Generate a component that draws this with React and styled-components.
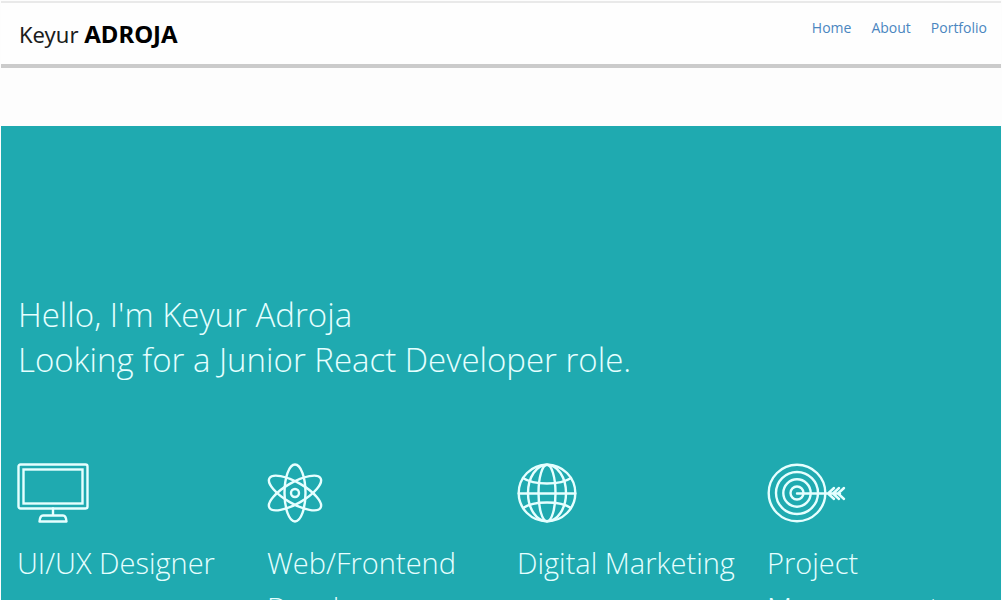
import React from "react";
import styled, { createGlobalStyle } from "styled-components";

const GlobalStyle = createGlobalStyle`
  *, *::before, *::after { box-sizing: border-box; }
  body {
    margin: 0;
    background: #fdfdfd;
    font-family: "Open Sans", "Noto Sans", sans-serif;
  }
`;

const Page = styled.div`
  padding: 1px 1px 0;
`;

const Header = styled.header`
  display: flex;
  justify-content: space-between;
  align-items: flex-start;
  height: 67px;
  padding: 15px 14px 0 18px;
  background: #fefefe;
  border-top: 2px solid #e9e9e9;
  border-bottom: 4px solid #cbcbcb;
`;

const Brand = styled.a`
  font-family: "Noto Sans", sans-serif;
  font-size: 22px;
  line-height: 32px;
  color: #1c1c1c;
  text-decoration: none;

  strong {
    font-size: 24px;
    font-weight: 700;
    color: #000;
  }
`;

const Nav = styled.nav`
  display: flex;
  gap: 20px;
`;

const NavLink = styled.a`
  font-size: 14px;
  line-height: 20px;
  color: #4a86c0;
  text-decoration: none;
`;

const Hero = styled.main`
  margin-top: 58px;
  padding: 166px 0 80px;
  background: #1faab0;
  color: #e6ffff;
`;

const Headline = styled.h1`
  margin: 0;
  padding: 0 17px;
  font-size: 33px;
  font-weight: 300;
  line-height: 45px;

  span {
    display: block;
  }
`;

const Services = styled.section`
  display: grid;
  grid-template-columns: repeat(4, 1fr);
  margin-top: 81px;
`;

const Service = styled.article`
  padding: 0 16px;
`;

const Icon = styled.svg`
  display: block;
  width: ${(p) => p.$width}px;
  height: 60px;
  fill: none;
  stroke: currentColor;
  stroke-width: 2.4;
  stroke-linejoin: round;
  stroke-linecap: round;
`;

const ServiceTitle = styled.h2`
  margin: 17px 0 0;
  font-size: 29px;
  font-weight: 300;
  line-height: 45px;
`;

const MonitorIcon = () => (
  <Icon $width={72} viewBox="0 0 72 60" aria-hidden="true">
    <rect x="1.5" y="1.5" width="69" height="44" rx="2" />
    <rect x="6.5" y="6.5" width="59" height="34" strokeLinejoin="miter" />
    <path d="M36 45.5V52M26 52.5H46Q49 52.5 49.5 58.5H22.5Q23 52.5 26 52.5Z" />
  </Icon>
);

const AtomIcon = () => (
  <Icon $width={56} viewBox="0 0 56 60" aria-hidden="true">
    <ellipse cx="28" cy="30" rx="10.5" ry="28.5" />
    <ellipse cx="28" cy="30" rx="10.5" ry="29.5" transform="rotate(60 28 30)" />
    <ellipse cx="28" cy="30" rx="10.5" ry="29.5" transform="rotate(-60 28 30)" />
    <circle cx="28" cy="30" r="4" />
  </Icon>
);

const GlobeIcon = () => (
  <Icon $width={60} viewBox="0 0 60 60" aria-hidden="true">
    <circle cx="30" cy="30" r="28.3" />
    <ellipse cx="30" cy="30" rx="19" ry="28.3" />
    <ellipse cx="30" cy="30" rx="8.5" ry="28.3" />
    <path d="M1.7 30.5H58.3M6 15Q14 20.5 30 20.5T54 15M6 45Q14 39.5 30 39.5T54 45" />
  </Icon>
);

const TargetIcon = () => (
  <Icon $width={80} viewBox="0 0 80 60" aria-hidden="true">
    <circle cx="30" cy="30" r="28.3" />
    <circle cx="30" cy="30" r="21" />
    <circle cx="30" cy="30" r="13.7" />
    <circle cx="30" cy="30" r="6.5" />
    <path d="M30 30.5H73M67 25L61 30.5L67 36M72 25L66 30.5L72 36M77 25L71 30.5L77 36" />
  </Icon>
);

const services = [
  { title: "UI/UX Designer", Drawing: MonitorIcon },
  { title: "Web/Frontend Developer", Drawing: AtomIcon },
  { title: "Digital Marketing", Drawing: GlobeIcon },
  { title: "Project Management", Drawing: TargetIcon },
];

const links = ["Home", "About", "Portfolio"];

export default function App() {
  return (
    <Page>
      <GlobalStyle />
      <Header>
        <Brand href="#home">
          Keyur <strong>ADROJA</strong>
        </Brand>
        <Nav aria-label="Main">
          {links.map((label) => (
            <NavLink key={label} href={`#${label.toLowerCase()}`}>
              {label}
            </NavLink>
          ))}
        </Nav>
      </Header>
      <Hero id="home">
        <Headline>
          <span>Hello, I'm Keyur Adroja</span>
          <span>Looking for a Junior React Developer role.</span>
        </Headline>
        <Services id="about">
          {services.map(({ title, Drawing }) => (
            <Service key={title}>
              <Drawing />
              <ServiceTitle>{title}</ServiceTitle>
            </Service>
          ))}
        </Services>
      </Hero>
    </Page>
  );
}
